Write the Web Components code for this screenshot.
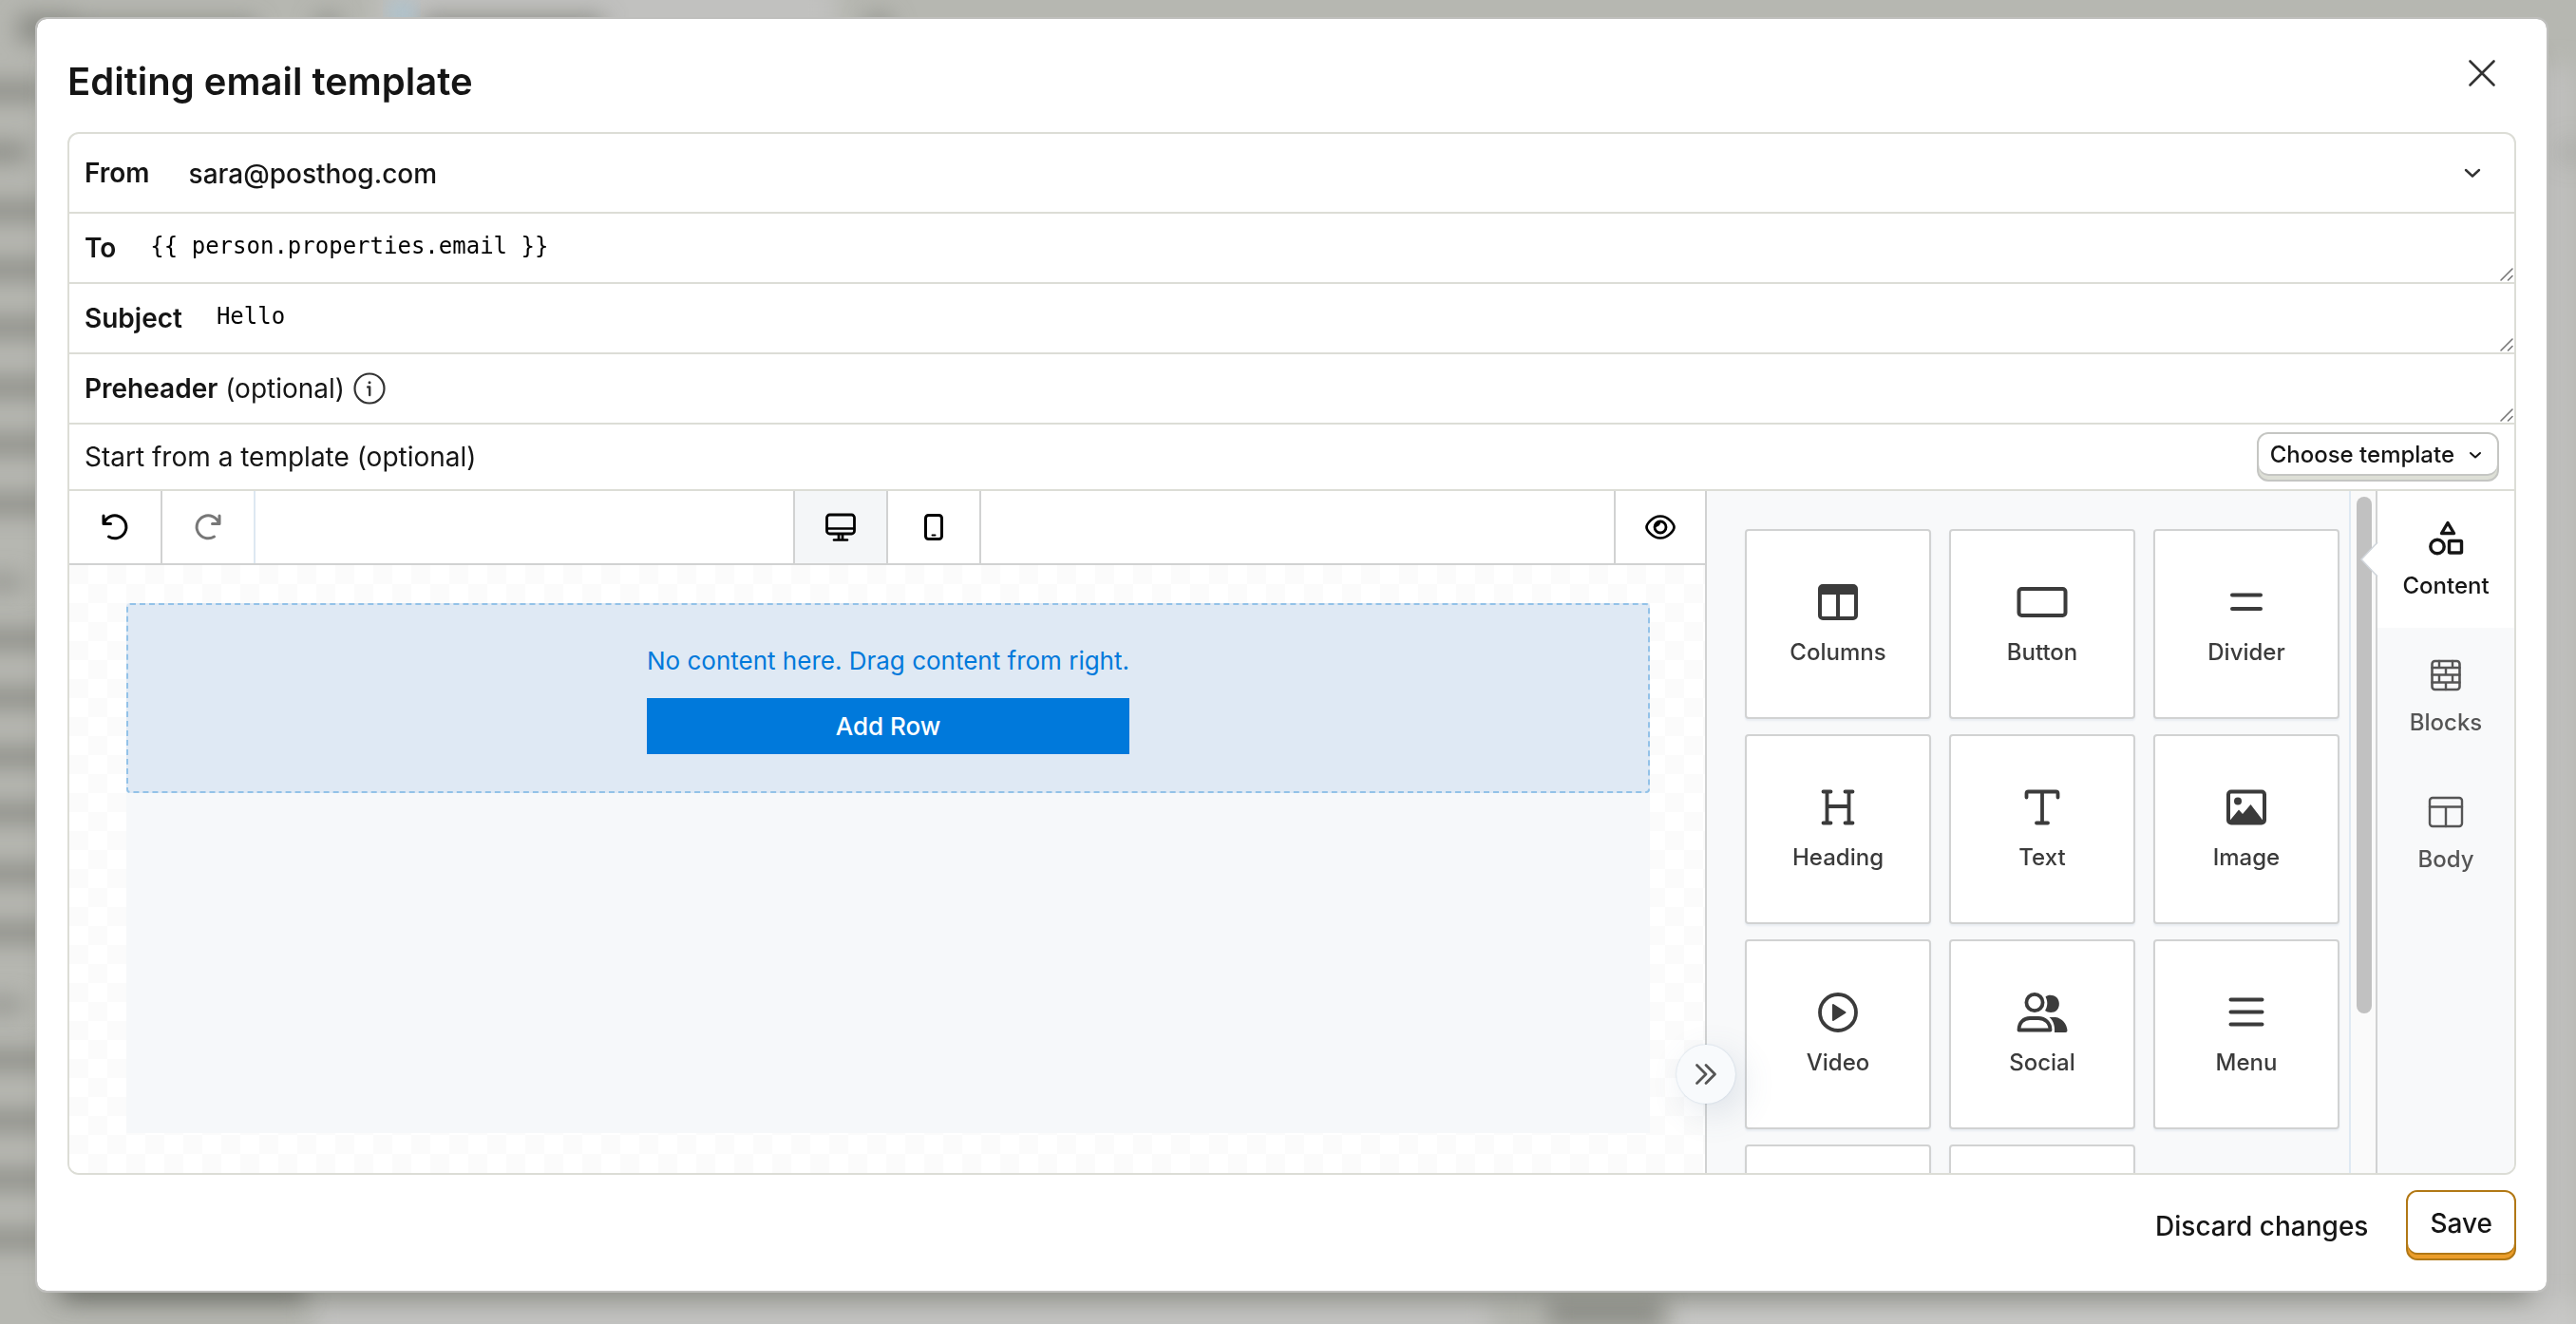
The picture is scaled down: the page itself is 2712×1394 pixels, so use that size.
<!DOCTYPE html>
<html lang="en">
<head>
<meta charset="utf-8">
<title>Editing email template</title>
<style>
  html { height: 100%; }
  body {
    margin: 0;
    min-height: 100%;
    display: flex;
    flex-direction: column;
    background: #b6b7b1;
    font-family: Inter, "Liberation Sans", sans-serif;
    font-size: 28px;
    line-height: 40px;
    color: #151515;
    --line: #dcddd6;
    --edge: #d1d2d2;
    --panel: #f8f9fa;
    --mono: "DejaVu Sans Mono", "Liberation Mono", monospace;
  }
</style>
</head>
<body>
<page-backdrop></page-backdrop>
<app-modal heading="Editing email template">
  <email-form></email-form>
  <action-button slot="footer" kind="plain">Discard changes</action-button>
  <action-button slot="footer" kind="primary">Save</action-button>
</app-modal>

<script>
const define = (name, html, setup) => {
  const template = document.createElement('template');
  template.innerHTML = '<style>*{box-sizing:border-box} button,select,textarea{font:inherit;color:inherit;margin:0} svg{display:block;flex:none}</style>' + html;
  customElements.define(name, class extends HTMLElement {
    constructor() {
      super();
      this.attachShadow({ mode: 'open' }).append(template.content.cloneNode(true));
    }
    connectedCallback() { if (setup) setup(this, this.shadowRoot); }
  });
};

const line = (d, w = 2, extra = '') =>
  `<path d="${d}" fill="none" stroke="currentColor" stroke-width="${w}" stroke-linecap="round" stroke-linejoin="round" ${extra}/>`;

/* Each icon: [viewBox size, markup] */
const ICONS = {
  close: [32, line('M3.500 3.500 28.500 28.500M28.500 3.500 3.500 28.500', 2.6)],
  chevron: [20, line('M3 7 10 13.500 17 7', 2.4)],
  'chevron-small': [16, line('M3 6 8 10.500 13 6', 2)],
  info: [36, '<circle cx="18" cy="18" r="15.500" fill="none" stroke="currentColor" stroke-width="2.200"/><circle cx="18" cy="11.800" r="1.500" fill="currentColor"/>' + line('M16.200 16.500H18.200V25', 2.4)],
  undo: [32, line('M4 4V12.500H11.500M4.500 12A12 12 0 1 1 9.500 26', 3)],
  redo: [32, line('M28 4V12.500H20.500M27.500 12A12 12 0 1 0 22.500 26', 3)],
  desktop: [36, '<rect x="3.500" y="5" width="29" height="20" rx="3" fill="none" stroke="currentColor" stroke-width="2.800"/>' + line('M4 19.500H32M16 26V31M20 26V31M11 31.500H25', 2.7)],
  mobile: [36, '<rect x="9.500" y="5.500" width="17" height="25" rx="3" fill="none" stroke="currentColor" stroke-width="3"/>' + line('M16.500 26.500H19.500', 2)],
  eye: [36, line('M3.500 18C3.500 15 9.500 6.500 18 6.500S32.500 15 32.500 18 26.500 29.500 18 29.500 3.500 21 3.500 18Z', 2.7) + '<circle cx="18" cy="18" r="6" fill="none" stroke="currentColor" stroke-width="2.800"/><path d="M12 18A6 6 0 0 1 18 12C18.500 15.500 16 18 12 18Z" fill="currentColor"/>'],
  collapse: [32, line('M6.500 6.500 16 16 6.500 25.500M16 6.500 25.500 16 16 25.500', 2.8)],
  columns: [48, '<rect x="5" y="7" width="38" height="34" rx="3" fill="none" stroke="currentColor" stroke-width="4"/><path d="M5 7H43V16H5ZM22 16H26V41H22Z" fill="currentColor"/>'],
  button: [56, '<rect x="3.500" y="14" width="49" height="28" rx="3" fill="none" stroke="currentColor" stroke-width="4"/>'],
  divider: [48, line('M9 16.500H39M9 31H39', 4)],
  heading: [48, line('M8.500 7.500H16.500M31.500 7.500H39.500M8.500 40.500H16.500M31.500 40.500H39.500M12.500 8V40M35.500 8V40M12.500 23H35.500', 3.8)],
  text: [48, line('M7.500 13.500V9.500Q7.500 7.500 9.500 7.500H38.500Q40.500 7.500 40.500 9.500V13.500M24 8V40M18 40.500H30', 3.8)],
  image: [48, '<rect x="5" y="7.500" width="38" height="33" rx="3" fill="none" stroke="currentColor" stroke-width="4"/><circle cx="15" cy="17.500" r="4" fill="currentColor"/><path d="M6.500 38 16 26.500 20 31 28.500 21 41.500 38V40H6.500Z" fill="currentColor"/>'],
  video: [48, '<circle cx="24" cy="24" r="19" fill="none" stroke="currentColor" stroke-width="3.800"/><path d="M19 16 31.500 24 19 32Z" fill="currentColor" stroke="currentColor" stroke-width="2" stroke-linejoin="round"/>'],
  social: [56, '<circle cx="20" cy="17.500" r="8.600" fill="none" stroke="currentColor" stroke-width="3.800"/><path d="M3.500 46.500C3.500 38 9 34 15 34H24C31 34 36.500 39 36.500 46.500Z" fill="none" stroke="currentColor" stroke-width="3.800" stroke-linejoin="round"/><path d="M31.500 11.500C34 9 39.500 9 43 12S47 22 43.500 25.500 34 28.500 31 26C34 21.500 34 16 31.500 11.500ZM35.500 33H42C49 34 54 40 54.500 47Q54.500 49 52.500 49H41C41.500 42 40 37 35.500 33Z" fill="currentColor"/>'],
  menu: [48, line('M7.500 10.500H40.500M7.500 23.500H40.500M7.500 36.500H40.500', 4)],
  content: [48, line('M26 7.500 32.500 18.500H19.500Z', 3.4) + '<circle cx="15" cy="32.500" r="7.200" fill="none" stroke="currentColor" stroke-width="3.400"/><rect x="27.500" y="26.500" width="13" height="12.500" rx="1" fill="none" stroke="currentColor" stroke-width="3.400"/>'],
  blocks: [48, '<rect x="9.500" y="9" width="29" height="30" rx="3" fill="none" stroke="currentColor" stroke-width="2.600"/>' + line('M9.500 16H38.500M9.500 23.500H38.500M9.500 31.500H38.500M17 9V16M31 9V16M24 16V23.500M17 23.500V31.500M31 23.500V31.500M24 31.500V39', 2.4)],
  body: [48, '<rect x="7" y="9" width="34" height="30" rx="3" fill="none" stroke="currentColor" stroke-width="2.400"/>' + line('M7 18.500H41M24 18.500V39', 2.4)],
  grip: [16, line('M2 14 14 2M9.500 14 14 9.500', 1.6)]
};

define('ui-icon', '<style>:host{display:block;flex:none}</style>', (host, root) => {
  const [box, markup] = ICONS[host.getAttribute('name')];
  const t = document.createElement('template');
  t.innerHTML = `<svg width="${box}" height="${box}" viewBox="0 0 ${box} ${box}" aria-hidden="true">${markup}</svg>`;
  root.append(t.content);
});

/* Out-of-focus page behind the dialog */
const rows = [25, 96, 160, 222, 284, 345, 408, 468, 531, 673, 735, 797, 856, 920, 982, 1116, 1180, 1242, 1305];
const faint = [613, 1058];
define('page-backdrop', `
<style>
  :host { position: fixed; inset: 0; z-index: -1; }
  svg { width: 100%; height: 100%; }
</style>
<svg viewBox="0 0 2712 1394" preserveAspectRatio="none" aria-hidden="true">
  <defs>
    <filter id="soft" x="-50%" y="-100%" width="200%" height="300%"><feGaussianBlur stdDeviation="12"/></filter>
  </defs>
  <rect width="2712" height="1394" fill="#b6b7b1"/>
  <rect x="2650" y="70" width="62" height="1324" fill="#bfbfbd" filter="url(#soft)"/>
  <rect x="400" y="-20" width="480" height="60" fill="#c1c1bf" filter="url(#soft)"/>
  <rect x="330" y="1370" width="1240" height="60" fill="#c3c3c1" filter="url(#soft)"/>
  <rect x="1760" y="1370" width="960" height="60" fill="#c8c8c6" filter="url(#soft)"/>
  <g fill="#868781" filter="url(#soft)">
    ${rows.map((y, i) => `<rect x="${i ? -40 : 20}" y="${y - 9}" width="${i ? [0, 90, 70][i] || 150 : 60}" height="18"/>`).join('')}
    <rect x="20" y="22" width="250" height="22"/>
    <rect x="60" y="22" width="170" height="12"/>
    <rect x="445" y="18" width="190" height="24"/>
    <rect x="70" y="1340" width="250" height="30"/>
    <rect x="1630" y="1372" width="120" height="22"/>
    <circle cx="2706" cy="160" r="14" opacity=".3"/>
  </g>
  <g fill="#8f908a" filter="url(#soft)">
    ${faint.map(y => `<rect x="-20" y="${y - 7}" width="45" height="14"/>`).join('')}
    <circle cx="345" cy="28" r="14"/><circle cx="925" cy="28" r="14"/>
  </g>
  <circle cx="423" cy="14" r="10" fill="#8ec4e4" filter="url(#soft)"/>
</svg>`);

define('app-modal', `
<style>
  :host {
    flex: 1;
    display: flex;
    flex-direction: column;
    margin: 18px 29px 33px 37px;
    padding: 0 32px 32px;
    border: 2px solid #bfbfbd;
    border-radius: 12px;
    background: #fff;
    background-clip: padding-box;
    box-shadow: 0 24px 24px -16px rgba(70, 72, 62, .35);
  }
  header { display: flex; align-items: center; justify-content: space-between; height: 119px; padding-bottom: 5px; box-sizing: border-box; }
  h2 { margin: 17px 0 0; font-size: 40px; line-height: 48px; font-weight: 600; }
  .close { display: flex; padding: 20px; border: 0; background: none; color: #333; }
  .main { flex: 1; display: flex; }
  footer { display: flex; align-items: center; justify-content: flex-end; gap: 16px; padding-top: 16px; }
</style>
<header><h2></h2><button class="close" aria-label="Close"><ui-icon name="close"></ui-icon></button></header>
<div class="main"><slot></slot></div>
<footer><slot name="footer"></slot></footer>
`, (host, root) => { root.querySelector('h2').textContent = host.getAttribute('heading'); });

define('action-button', `
<style>
  :host { display: block; }
  button { display: block; padding: 0; border: 0; background: none; font-weight: 500; }
  span { display: flex; align-items: center; gap: 14px; }
  :host([kind="plain"]) span { padding: 6px 24px 4px; }
  :host([kind="primary"]) button { padding-bottom: 6px; border: 2px solid #b17816; border-radius: 12px; background: #eb9d2a; }
  :host([kind="primary"]) span { height: 64px; padding: 2px 23px 0; border-radius: 10px; background: #fff; box-shadow: 0 2px 0 #b17816; }
  :host([kind="small"]) button { padding-bottom: 6px; border: 2px solid #c5c6c3; border-radius: 12px; background: #dddfd6; font-size: 24px; }
  :host([kind="small"]) span { height: 42px; padding: 2px 15px 0 12px; border-radius: 10px; background: #fff; box-shadow: 0 2px 0 #c5c6c3; }
</style>
<button><span><slot></slot></span></button>`);

define('email-form', `
<style>
  :host {
    flex: 1;
    display: flex;
    flex-direction: column;
    border: 2px solid var(--line);
    border-radius: 12px;
    overflow: hidden;
    min-width: 0;
  }
</style>
<sender-field label="From" value="sara@posthog.com"></sender-field>
<text-field label="To" value="{{ person.properties.email }}"></text-field>
<text-field label="Subject" value="Hello"></text-field>
<text-field label="Preheader" note="(optional)" hint></text-field>
<template-row></template-row>
<email-editor></email-editor>`);

const ROW = 'display:flex;align-items:center;border-bottom:2px solid var(--line);padding-left:16px;';

define('sender-field', `
<style>
  :host { ${ROW} height: 84px; position: relative; box-sizing: border-box; }
  label { font-weight: 600; }
  select { flex: 1; height: 80px; padding: 2px 80px 0 41px; border: 0; appearance: none; background: none; font-weight: 500; }
  ui-icon { position: absolute; right: 34px; color: #333; pointer-events: none; }
</style>
<label for="sender"></label>
<select id="sender"><option></option></select>
<ui-icon name="chevron"></ui-icon>
`, (host, root) => {
  root.querySelector('label').textContent = host.getAttribute('label');
  root.querySelector('option').textContent = host.getAttribute('value');
});

define('text-field', `
<style>
  :host { ${ROW} height: 74px; box-sizing: border-box; }
  label { font-weight: 600; }
  label span { font-weight: 400; }
  .hint { margin-left: 8px; color: #333; }
  textarea {
    flex: 1;
    height: 72px;
    padding: 16px 0 0 36px;
    border: 0;
    resize: none;
    overflow: hidden;
    background: none;
    font: 24px/36px var(--mono);
    color: #000;
  }
  .grip { align-self: flex-end; color: #777; }
</style>
<label for="box"></label>
<textarea id="box" rows="1"></textarea>
<ui-icon class="grip" name="grip"></ui-icon>
`, (host, root) => {
  const label = root.querySelector('label');
  label.textContent = host.getAttribute('label');
  if (host.hasAttribute('note')) {
    const note = document.createElement('span');
    note.textContent = ' ' + host.getAttribute('note');
    label.append(note);
  }
  if (host.hasAttribute('hint')) {
    const icon = document.createElement('ui-icon');
    icon.className = 'hint';
    icon.setAttribute('name', 'info');
    label.after(icon);
  }
  root.querySelector('textarea').value = host.getAttribute('value') || '';
});

define('template-row', `
<style>
  :host { ${ROW} height: 70px; padding-right: 16px; justify-content: space-between; box-sizing: border-box; }
</style>
<span>Start from a template (optional)</span>
<action-button kind="small">Choose template<ui-icon name="chevron-small"></ui-icon></action-button>`);

define('email-editor', `
<style>
  :host { flex: 1; display: flex; min-height: 0; position: relative; }
  .stage { flex: 1; display: flex; flex-direction: column; border-right: 2px solid var(--edge); }
  tool-palette { width: 704px; }
  tool-tabs { width: 146px; }
</style>
<div class="stage">
  <editor-toolbar></editor-toolbar>
  <editor-canvas></editor-canvas>
</div>
<tool-palette></tool-palette>
<tool-tabs></tool-tabs>`);

define('editor-toolbar', `
<style>
  :host { display: flex; justify-content: space-between; height: 78px; box-sizing: border-box; border-bottom: 2px solid var(--edge); background: #fff; color: #000; }
  div { display: flex; flex: 1; }
  .mid { flex: none; border-left: 2px solid var(--edge); }
  .end { justify-content: flex-end; }
  button { display: flex; align-items: center; justify-content: center; width: 98px; padding: 0; border: 0; border-right: 2px solid var(--edge); background: none; }
  .redo { border-color: #dde8f2; color: #777; }
  .on { background: #f4f6f8; }
  .end button { width: 96px; border-right: 0; border-left: 2px solid var(--edge); }
</style>
<div><button aria-label="Undo"><ui-icon name="undo"></ui-icon></button><button class="redo" aria-label="Redo"><ui-icon name="redo"></ui-icon></button></div>
<div class="mid"><button class="on" aria-label="Desktop"><ui-icon name="desktop"></ui-icon></button><button aria-label="Mobile"><ui-icon name="mobile"></ui-icon></button></div>
<div class="end"><button aria-label="Preview"><ui-icon name="eye"></ui-icon></button></div>`);

define('editor-canvas', `
<style>
  :host {
    flex: 1;
    display: flex;
    flex-direction: column;
    padding: 40px 58px 42px 60px;
    background: repeating-conic-gradient(#fff 0 25%, #fbfbfb 0 50%) 0 0 / 40px 40px;
  }
  .body { flex: 1; background: #f6f8fa; }
  .drop {
    display: flex;
    flex-direction: column;
    align-items: center;
    height: 200px;
    padding-top: 39px;
    border: 2px dashed #93c2e8;
    border-radius: 4px;
    background: #dfe9f4;
    color: #0079db;
    font-size: 26px;
  }
  .ask { display: flex; flex-direction: column; gap: 19px; }
  p { margin: 0; }
  button { height: 59px; padding: 0; border: 0; background: #0079db; color: #fff; font-weight: 500; }
</style>
<div class="body">
  <div class="drop"><div class="ask"><p>No content here. Drag content from right.</p><button>Add Row</button></div></div>
</div>`);

define('tool-palette', `
<style>
  :host { display: flex; position: relative; background: var(--panel); }
  .list {
    flex: 1;
    height: 0;
    min-height: 100%;
    overflow: hidden;
    display: grid;
    grid-template-columns: repeat(3, 1fr);
    grid-auto-rows: 200px;
    align-content: start;
    gap: 16px 19px;
    padding: 40px 10px 0 40px;
  }
  .track { width: 28px; padding: 6px 0 0 6px; border-left: 2px solid #dfe9f3; background: #fafafa; }
  .thumb { width: 16px; height: 544px; border-radius: 8px; background: #c1c1c1; }
  .collapse {
    position: absolute;
    left: -32px;
    top: 583px;
    display: flex;
    align-items: center;
    justify-content: center;
    width: 62px;
    height: 62px;
    padding: 0;
    border: 0;
    border-radius: 50%;
    background: #f8fafc;
    color: #555;
    box-shadow: 8px 10px 36px rgba(90, 110, 140, .16), 0 0 2px rgba(100, 140, 180, .35);
  }
</style>
<div class="list">
  <tool-tile icon="columns">Columns</tool-tile>
  <tool-tile icon="button">Button</tool-tile>
  <tool-tile icon="divider">Divider</tool-tile>
  <tool-tile icon="heading">Heading</tool-tile>
  <tool-tile icon="text">Text</tool-tile>
  <tool-tile icon="image">Image</tool-tile>
  <tool-tile icon="video">Video</tool-tile>
  <tool-tile icon="social">Social</tool-tile>
  <tool-tile icon="menu">Menu</tool-tile>
  <tool-tile></tool-tile>
  <tool-tile></tool-tile>
</div>
<div class="track"><div class="thumb"></div></div>
<button class="collapse" aria-label="Collapse panel"><ui-icon name="collapse"></ui-icon></button>`);

define('tool-tile', `
<style>
  :host {
    display: flex;
    flex-direction: column;
    align-items: center;
    gap: 13px;
    padding-top: 51px;
    border: 2px solid var(--edge);
    border-radius: 4px;
    background: #fff;
    box-sizing: border-box;
    box-shadow: 0 2px 2px rgba(120, 150, 190, .12);
    font-size: 24px;
    line-height: 32px;
    font-weight: 500;
    color: #3b3b3b;
  }
  .pic { display: flex; align-items: center; height: 48px; }
</style>
<div class="pic"></div>
<slot></slot>`, (host, root) => {
  if (!host.hasAttribute('icon')) return;
  const icon = document.createElement('ui-icon');
  icon.setAttribute('name', host.getAttribute('icon'));
  root.querySelector('.pic').append(icon);
});

define('tool-tabs', `
<style>
  :host { display: block; position: relative; box-sizing: border-box; border-left: 2px solid var(--edge); background: var(--panel); }
  button {
    display: flex;
    flex-direction: column;
    align-items: center;
    gap: 10px;
    width: 100%;
    height: 144px;
    padding: 26px 0 0;
    border: 0;
    background: none;
    font-size: 24px;
    line-height: 32px;
    font-weight: 500;
    color: #555;
  }
  .on { background: #fff; color: #151515; }
  .arrow { position: absolute; left: -18px; top: 53px; }
</style>
<button class="on"><ui-icon name="content"></ui-icon>Content</button>
<button><ui-icon name="blocks"></ui-icon>Blocks</button>
<button><ui-icon name="body"></ui-icon>Body</button>
<svg class="arrow" width="19" height="38" viewBox="0 0 19 38" aria-hidden="true"><path d="M19 1 1 19 19 37Z" fill="#fff"/><path d="M18 1 1 19 18 37" fill="none" stroke="#d1d6dc" stroke-width="1.600"/></svg>`);
</script>
</body>
</html>
